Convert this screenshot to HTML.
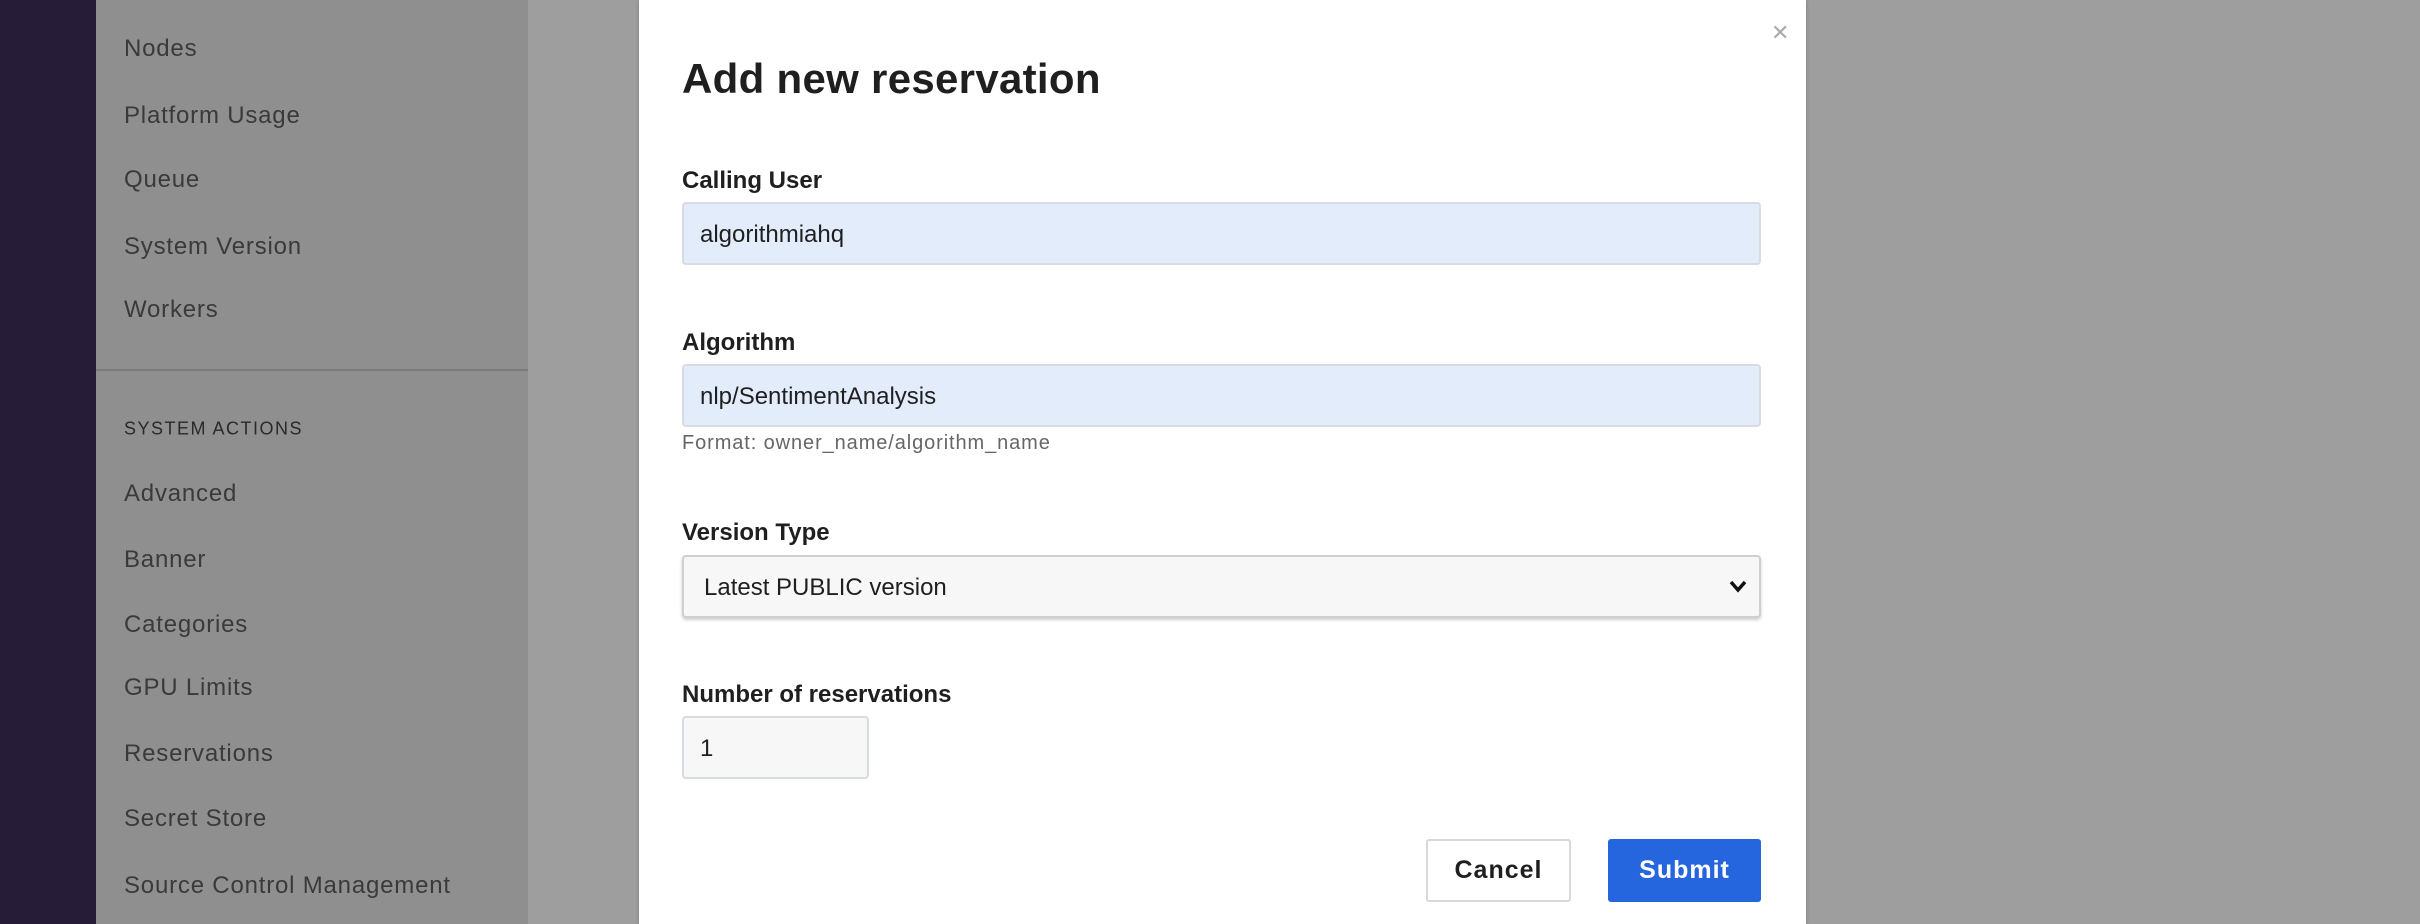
<!DOCTYPE html>
<html><head><style>
*{box-sizing:border-box;margin:0;padding:0}
body{width:2420px;height:924px;overflow:hidden;background:#9e9e9e;font-family:"Liberation Sans",sans-serif;position:relative}
.dark{position:absolute;left:0;top:0;width:96px;height:924px;background:#261c38}
.side{position:absolute;left:96px;top:0;width:432px;height:924px;background:#8f8f8f}
.it{position:absolute;left:28px;font-size:24px;letter-spacing:0.8px;color:#3a3a3a;transform:translateY(-50%);margin-top:3px}
.hd{position:absolute;left:28px;font-size:18px;letter-spacing:1.5px;color:#2a2a2a;transform:translateY(-50%);margin-top:2px}
.div{position:absolute;left:0;top:369px;width:432px;height:2px;background:#7a7a7a}
.modal{position:absolute;left:639px;top:0;width:1167px;height:924px;background:#fff;box-shadow:0 0 4px rgba(0,0,0,.2)}
.x{position:absolute;left:1132px;top:20px;font-size:22px;color:#aaa}
h1{position:absolute;left:43px;top:55px;font-size:42px;font-weight:bold;letter-spacing:0.3px;color:#1f1f1f}
.lb{position:absolute;left:43px;font-size:24px;font-weight:bold;color:#1f1f1f;transform:translateY(-50%);margin-top:2px}
.in{position:absolute;left:43px;width:1079px;height:63px;background:#e3ecfb;border:2px solid #d8dbe0;border-radius:4px;font-size:24px;color:#1f1f1f;padding-left:16px;line-height:61px}
.sel{background:#f7f7f7;border:2px solid #cfcfcf;box-shadow:0 2px 3px rgba(0,0,0,.2);padding-left:20px}
.hint{position:absolute;left:43px;top:432px;font-size:20px;letter-spacing:0.9px;color:#666}
.btn{position:absolute;top:839px;height:63px;font-size:25px;font-weight:bold;letter-spacing:1px;text-align:center;line-height:63px;border-radius:3px}
</style></head><body>
<div class="dark"></div>
<div class="side">
<div class="it" style="top:46px">Nodes</div>
<div class="it" style="top:113px">Platform Usage</div>
<div class="it" style="top:177px">Queue</div>
<div class="it" style="top:244px">System Version</div>
<div class="it" style="top:307px">Workers</div>
<div class="div"></div>
<div class="hd" style="top:427px">SYSTEM ACTIONS</div>
<div class="it" style="top:491px">Advanced</div>
<div class="it" style="top:557px">Banner</div>
<div class="it" style="top:622px">Categories</div>
<div class="it" style="top:685px">GPU Limits</div>
<div class="it" style="top:751px">Reservations</div>
<div class="it" style="top:816px">Secret Store</div>
<div class="it" style="top:883px">Source Control Management</div>
</div>
<div class="modal">
<div class="x">✕</div>
<h1>Add new reservation</h1>
<div class="lb" style="top:179px">Calling User</div>
<div class="in" style="top:202px">algorithmiahq</div>
<div class="lb" style="top:341px">Algorithm</div>
<div class="in" style="top:364px">nlp/SentimentAnalysis</div>
<div class="hint">Format: owner_name/algorithm_name</div>
<div class="lb" style="top:531px">Version Type</div>
<div class="in sel" style="top:555px">Latest PUBLIC version
<svg style="position:absolute;right:12px;top:22px" width="18" height="14" viewBox="0 0 18 14"><path d="M2 3 L9 11 L16 3" stroke="#111" stroke-width="3.5" fill="none"/></svg></div>
<div class="lb" style="top:693px">Number of reservations</div>
<div class="in" style="top:716px;width:187px;background:#f7f7f7">1</div>
<div class="btn" style="left:787px;width:145px;border:2px solid #d8d8d8;color:#1f1f1f;line-height:59px">Cancel</div>
<div class="btn" style="left:969px;width:153px;background:#2566df;color:#fff">Submit</div>
</div>
</body></html>
